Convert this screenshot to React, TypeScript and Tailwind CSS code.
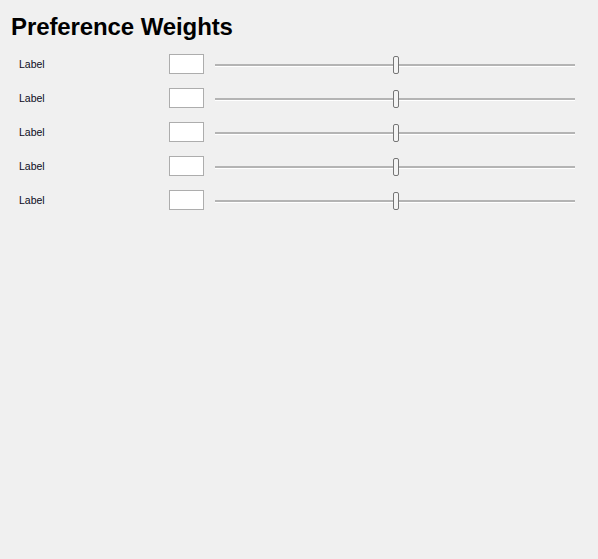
import { useState } from 'react';

const ROWS = ['w1', 'w2', 'w3', 'w4', 'w5'];

function Slider({ value }: { value: number }) {
  return (
    <div className="relative flex h-[20px] w-[360px] flex-col justify-center">
      {/* track */}
      <div className="mt-[2px] flex flex-col">
        <div className="h-[2px] bg-[#b4b4b4]" />
        <div className="h-[1px] bg-white" />
      </div>
      {/* thumb */}
      <div
        className="absolute top-[2px] h-[18px] w-[6px] rounded-[2px] border border-[#767676] bg-[#f4f4f4]"
        style={{ left: `calc(${value}% - 2px)` }}
      />
    </div>
  );
}

export default function App() {
  const [values] = useState<number[]>(ROWS.map(() => 50));

  return (
    <div
      className="h-[559px] w-[598px] bg-[#f0f0f0] pt-[15px]"
      style={{ fontFamily: '"Liberation Sans", Arial, sans-serif' }}
    >
      <h1 className="pl-[11px] text-[24px] font-bold leading-6 tracking-[-0.1px] text-black">Preference Weights</h1>

      <div className="mt-[8px] flex flex-col">
        {ROWS.map((id, i) => (
          <div key={id} className="flex h-[34px] items-center">
            <span className="mt-[2px] w-[169px] pl-[19px] text-[10.5px] text-[#0c0c1c]">Label</span>
            <div className="h-[20px] w-[35px] border border-[#adadad] bg-white" />
            <div className="ml-[11px]">
              <Slider value={values[i]} />
            </div>
          </div>
        ))}
      </div>
    </div>
  );
}
